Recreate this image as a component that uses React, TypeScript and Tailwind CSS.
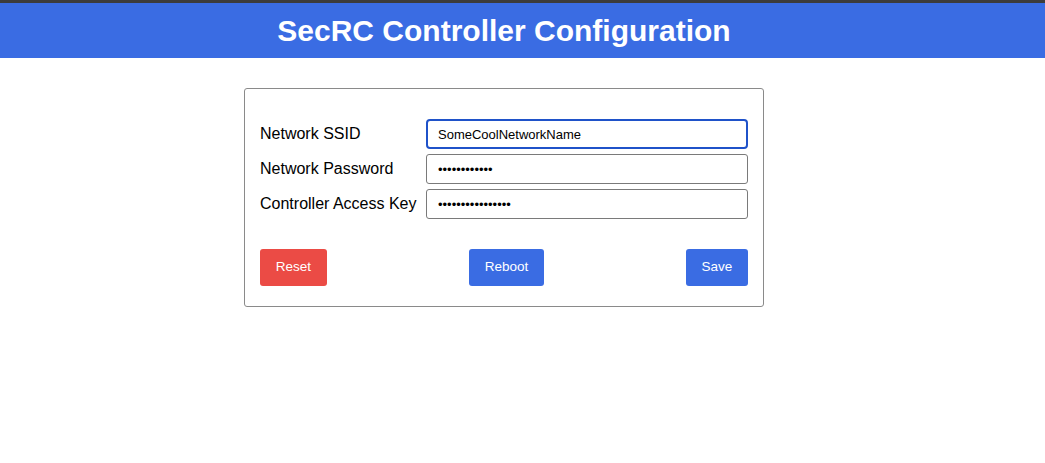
import React from "react";

const fields = [
  { id: "ssid", label: "Network SSID", type: "text", value: "SomeCoolNetworkName", focused: true },
  { id: "password", label: "Network Password", type: "password", value: "abcdefghijkl", focused: false },
  { id: "key", label: "Controller Access Key", type: "password", value: "abcdefghijklmnop", focused: false }
];

export default function App() {
  return (
    <div className="min-h-[463px] bg-white font-['Liberation_Sans',Arial,sans-serif] text-black">
      <div className="h-[3px] bg-[#3c3c3c]" />
      <header className="h-[55px] bg-[#3a6ce3]">
        <div className="flex h-full w-[1008px] items-center justify-center">
          <h1 className="text-[30px] font-bold text-white">SecRC Controller Configuration</h1>
        </div>
      </header>

      <div className="flex w-[1008px] justify-center pt-[30px]">
        <div className="w-[520px] rounded-[3px] border border-[#8a8a8a] px-[15px] pt-[30px] pb-[20px]">
          <div className="grid gap-[5px]">
            {fields.map((field) => (
              <div key={field.id} className="grid grid-cols-[166px_1fr] items-center">
                <label htmlFor={field.id} className="text-[16px]">
                  {field.label}
                </label>
                <input
                  id={field.id}
                  type={field.type}
                  defaultValue={field.value}
                  className={
                    field.focused
                      ? "h-[30px] w-full rounded-[4px] border-2 border-[#1f52c9] pl-[10px] text-[13px] outline-none"
                      : "h-[30px] w-full rounded-[3px] border border-[#7a7a7a] pl-[11px] text-[13px] outline-none"
                  }
                />
              </div>
            ))}
          </div>

          <div className="mt-[30px] flex items-center justify-between">
            <button type="button" className="h-[37px] w-[67px] rounded-[3px] bg-[#eb4b45] text-[13.5px] text-white">
              Reset
            </button>
            <button type="button" className="h-[37px] w-[75px] rounded-[3px] bg-[#3a6ce3] text-[13.5px] text-white">
              Reboot
            </button>
            <button type="button" className="h-[37px] w-[62px] rounded-[3px] bg-[#3a6ce3] text-[13.5px] text-white">
              Save
            </button>
          </div>
        </div>
      </div>
    </div>
  );
}
